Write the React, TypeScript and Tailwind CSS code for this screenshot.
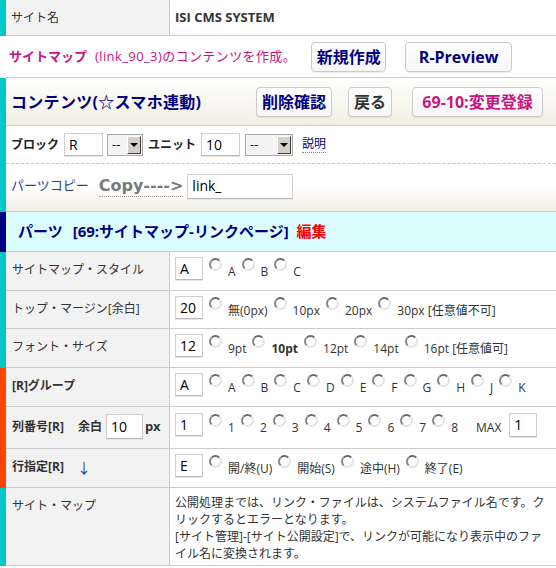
import React from "react";

const CYAN = "bg-[#00c8c8]";
const ORANGE = "bg-[#ff4500]";

function Radio({ label, bold }: { label: string; bold?: boolean }) {
	return (
		<span className="ml-[6px] flex items-start">
			<span className="mt-[1px] inline-block h-[13px] w-[13px] shrink-0 rounded-full border-2 border-t-[#6a6a6a] border-r-[#e4e4e4] border-b-[#e4e4e4] border-l-[#858585] bg-white" />
			<span
				className={`ml-[6px] mt-[8px] whitespace-nowrap text-[12px] leading-[14px] text-[#333] ${bold ? "font-bold" : "font-normal"}`}
			>
				{label}
			</span>
		</span>
	);
}

function Box({ value, w = "w-[28px]", h = "h-[23px]" }: { value: string; w?: string; h?: string }) {
	return (
		<span
			className={`flex ${w} ${h} shrink-0 items-center border border-[#cfcfcf] border-b-[#b8b8b8] bg-white pl-[4px] text-[14px] font-normal leading-none text-black shadow-[0_1px_0_#e6e6e6]`}
		>
			{value}
		</span>
	);
}

function Select({ w }: { w: string }) {
	return (
		<span className={`flex h-[22px] ${w} shrink-0 items-center border border-[#a8a8a8] bg-[#f4f4f4]`}>
			<span className="flex-1 pl-[4px] text-[13px] font-normal leading-none text-black">--</span>
			<span className="mr-[1px] flex h-[18px] w-[14px] items-center justify-center border border-t-white border-r-[#404040] border-b-[#404040] border-l-white bg-[#d4d0c8]">
				<span className="h-0 w-0 border-x-[4px] border-t-[4px] border-x-transparent border-t-black" />
			</span>
		</span>
	);
}

function Btn({ children, w, color }: { children: React.ReactNode; w: string; color: string }) {
	return (
		<span
			className={`flex h-[30px] ${w} items-center justify-center rounded-[4px] border border-[#cacaca] bg-gradient-to-b from-white to-[#f6f6f6] text-[16px] font-bold leading-none shadow-[0_1px_1px_rgba(0,0,0,0.08)] ${color}`}
		>
			{children}
		</span>
	);
}

function Row({
	bar,
	label,
	h,
	pt = "pt-[5px]",
	top,
	children,
}: {
	bar: string;
	label: React.ReactNode;
	h: string;
	pt?: string;
	top?: boolean;
	children: React.ReactNode;
}) {
	return (
		<div className={`flex ${h}`}>
			<div className={`w-[6px] shrink-0 ${bar}`} />
			<div className="flex flex-1 border-b border-[#cccccc]">
				<div
					className={`flex w-[164px] shrink-0 border-r border-[#cccccc] bg-[#f2f2f2] pl-[6px] text-[12px] text-[#333] ${top ? "items-start pt-[9px]" : "items-center pb-[2px]"}`}
				>
					{label}
				</div>
				<div className={`flex flex-1 items-start pl-[5px] ${pt}`}>{children}</div>
			</div>
		</div>
	);
}

export default function App() {
	return (
		<div className="w-[556px] bg-white font-['Open_Sans','Noto_Sans_CJK_JP',sans-serif] text-[#333]">
			{/* site name */}
			<div className="flex h-[36px]">
				<div className={`w-[6px] shrink-0 ${CYAN}`} />
				<div className="flex flex-1 border-b border-[#cccccc]">
					<div className="flex w-[164px] shrink-0 items-center border-r border-[#cccccc] bg-[#f2f2f2] pl-[5px] text-[12px]">
						サイト名
					</div>
					<div className="flex flex-1 items-center pl-[5px] text-[13px] font-bold text-[#333]">ISI CMS SYSTEM</div>
				</div>
			</div>

			{/* sitemap line */}
			<div className="ml-[6px] flex h-[42px] items-center border-b border-[#cccccc] pl-[3px] text-[13px] text-[#c8157f]">
				<span className="font-bold">サイトマップ</span>
				<span className="ml-[8px] tracking-[0.4px]">(link_90_3)のコンテンツを作成。</span>
				<span className="ml-[15px]">
					<Btn w="w-[75px]" color="text-[#000080]">
						新規作成
					</Btn>
				</span>
				<span className="ml-[19px]">
					<Btn w="w-[107px]" color="text-[#000080]">
						R-Preview
					</Btn>
				</span>
			</div>

			{/* contents block */}
			<div className="flex">
				<div className={`w-[6px] shrink-0 ${CYAN}`} />
				<div className="flex flex-1 flex-col">
					<div className="flex h-[48px] items-center border-b border-[#cccccc] bg-gradient-to-b from-white to-[#f2f0e2] pl-[5px]">
						<span className="text-[16px] font-bold tracking-[0.3px] text-[#000080]">コンテンツ(☆スマホ連動)</span>
						<span className="ml-auto mr-[13px] flex items-center">
							<Btn w="w-[76px]" color="text-[#000080]">
								削除確認
							</Btn>
							<span className="ml-[16px]">
								<Btn w="w-[44px]" color="text-[#333]">
									戻る
								</Btn>
							</span>
							<span className="ml-[20px]">
								<Btn w="w-[131px]" color="text-[#c8157f]">
									69-10:変更登録
								</Btn>
							</span>
						</span>
					</div>
					<div className="flex h-[38px] items-center border-b border-dashed border-[#c8c8c8] pl-[5px] text-[12px] font-bold text-[#222]">
						<span>ブロック</span>
						<span className="ml-[5px]">
							<Box value="R" w="w-[39px]" />
						</span>
						<span className="ml-[4px]">
							<Select w="w-[36px]" />
						</span>
						<span className="ml-[5px]">ユニット</span>
						<span className="ml-[5px]">
							<Box value="10" w="w-[39px]" />
						</span>
						<span className="ml-[5px]">
							<Select w="w-[48px]" />
						</span>
						<span className="ml-[9px] border-b border-dotted border-[#888] font-normal leading-[16px] text-[#000080]">
							説明
						</span>
					</div>
					<div className="flex h-[48px] items-center border-b border-[#cccccc] bg-gradient-to-b from-white via-white to-[#f2f0e2] pb-[3px] pl-[5px]">
						<span className="text-[13px] text-[#2a3f96]">パーツコピー</span>
						<span className="ml-[10px] border-b border-dotted border-[#999] font-['DejaVu_Sans',sans-serif] text-[16px] font-bold leading-[20px] text-[#7a7a7a]">
							Copy----&gt;
						</span>
						<span className="ml-[4px]">
							<Box value="link_" w="w-[106px]" h="h-[25px]" />
						</span>
					</div>
				</div>
			</div>

			{/* parts header */}
			<div className="flex h-[40px]">
				<div className="w-[6px] shrink-0 bg-[#000080]" />
				<div className="flex flex-1 items-center border-b border-[#cccccc] bg-[#dcfdfd] pb-[1px] pl-[12px] text-[15px] font-bold">
					<span className="text-[#000080]">パーツ</span>
					<span className="ml-[10px] text-[#000080]">[69:サイトマップ-リンクページ]</span>
					<span className="ml-[8px] text-[#ff0000]">編集</span>
				</div>
			</div>

			<Row bar={CYAN} h="h-[39px]" label="サイトマップ・スタイル">
				<Box value="A" />
				<Radio label="A" />
				<Radio label="B" />
				<Radio label="C" />
			</Row>

			<Row bar={CYAN} h="h-[38px]" label="トップ・マージン[余白]">
				<Box value="20" />
				<Radio label="無(0px)" />
				<Radio label="10px" />
				<Radio label="20px" />
				<Radio label="30px [任意値不可]" />
			</Row>

			<Row bar={CYAN} h="h-[39px]" label="フォント・サイズ">
				<Box value="12" />
				<Radio label="9pt" />
				<Radio label="10pt" bold />
				<Radio label="12pt" />
				<Radio label="14pt" />
				<Radio label="16pt [任意値可]" />
			</Row>

			<Row bar={ORANGE} h="h-[39px]" label={<span className="font-bold">[R]グループ</span>}>
				<Box value="A" />
				{["A", "B", "C", "D", "E", "F", "G", "H", "J", "K"].map((l) => (
					<Radio key={l} label={l} />
				))}
			</Row>

			<Row
				bar={ORANGE}
				h="h-[42px]"
				pt="pt-[6px]"
				label={
					<span className="flex items-center font-bold">
						<span>列番号[R]</span>
						<span className="ml-[14px]">余白</span>
						<span className="ml-[4px]">
							<Box value="10" w="w-[37px]" h="h-[25px]" />
						</span>
						<span className="ml-[2px] text-[13px]">px</span>
					</span>
				}
			>
				<Box value="1" />
				{["1", "2", "3", "4", "5", "6", "7", "8"].map((l) => (
					<Radio key={l} label={l} />
				))}
				<span className="ml-[18px] mt-[8px] text-[12px] leading-[14px]">MAX</span>
				<span className="ml-[8px]">
					<Box value="1" h="h-[24px]" />
				</span>
			</Row>

			<Row
				bar={ORANGE}
				h="h-[39px]"
				label={
					<span className="flex items-center font-bold">
						<span>行指定[R]</span>
						<span className="ml-[13px] text-[14px] font-normal text-[#2a3f96]">↓</span>
					</span>
				}
			>
				<Box value="E" />
				<Radio label="開/終(U)" />
				<Radio label="開始(S)" />
				<Radio label="途中(H)" />
				<Radio label="終了(E)" />
			</Row>

			<Row bar={CYAN} h="h-[78px]" top label="サイト・マップ">
				<p className="pt-[1px] text-[12px] leading-[17px] text-[#333]">
					公開処理までは、リンク・ファイルは、システムファイル名です。ク
					<br />
					リックするとエラーとなります。
					<br />
					[サイト管理]-[サイト公開設定]で、リンクが可能になり表示中のファ
					<br />
					イル名に変換されます。
				</p>
			</Row>
		</div>
	);
}
